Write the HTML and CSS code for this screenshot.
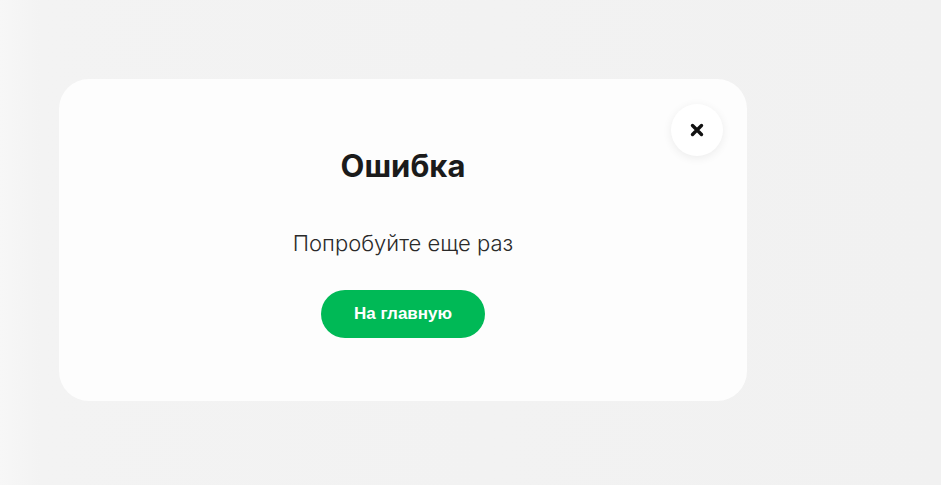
FILE: index.html
```html
<!DOCTYPE html>
<html lang="ru">
<head>
<meta charset="utf-8">
<link rel="stylesheet" href="styles.css">
</head>
<body>
<div class="page">
  <div class="modal">
    <button class="close" aria-label="Закрыть">
      <svg width="14" height="14" viewBox="0 0 14 14"><path d="M2.5 2.5 L11.5 11.5 M11.5 2.5 L2.5 11.5" stroke="#111" stroke-width="3.4" stroke-linecap="round"/></svg>
    </button>
    <h1 class="title">Ошибка</h1>
    <p class="text">Попробуйте еще раз</p>
    <a class="btn" href="#">На главную</a>
  </div>
</div>
</body>
</html>
```
FILE: styles.css
```css
html, body {
  margin: 0;
  padding: 0;
  height: 100%;
}
body {
  background: linear-gradient(90deg, #f7f7f7 0px, #f3f3f3 40px, #f1f1f1 100%);
  font-family: Inter, "Noto Sans", sans-serif;
}
.page {
  padding: 79px 0 0 59px;
}
.modal {
  position: relative;
  box-sizing: border-box;
  width: 688px;
  height: 322px;
  background: #fdfdfd;
  border-radius: 30px;
  display: flex;
  flex-direction: column;
  align-items: center;
  padding-top: 68px;
}
.close {
  position: absolute;
  top: 25px;
  right: 24px;
  width: 52px;
  height: 52px;
  border-radius: 50%;
  border: none;
  background: #fff;
  box-shadow: 0 2px 10px rgba(0,0,0,0.07);
  display: flex;
  align-items: center;
  justify-content: center;
  padding: 0;
}
.title {
  margin: 0;
  font-size: 31px;
  line-height: 38px;
  font-weight: 700;
  color: #1b1b1b;
}
.text {
  margin: 45px 0 0;
  font-size: 22px;
  line-height: 26px;
  font-weight: 300;
  color: #2a2a2a;
}
.btn {
  margin-top: 34px;
  width: 164px;
  height: 48px;
  border-radius: 24px;
  background: #00b956;
  color: #fff;
  text-decoration: none;
  font-family: "Liberation Sans", Arial, sans-serif;
  font-weight: 700;
  font-size: 17px;
  display: flex;
  align-items: center;
  justify-content: center;
}
```
